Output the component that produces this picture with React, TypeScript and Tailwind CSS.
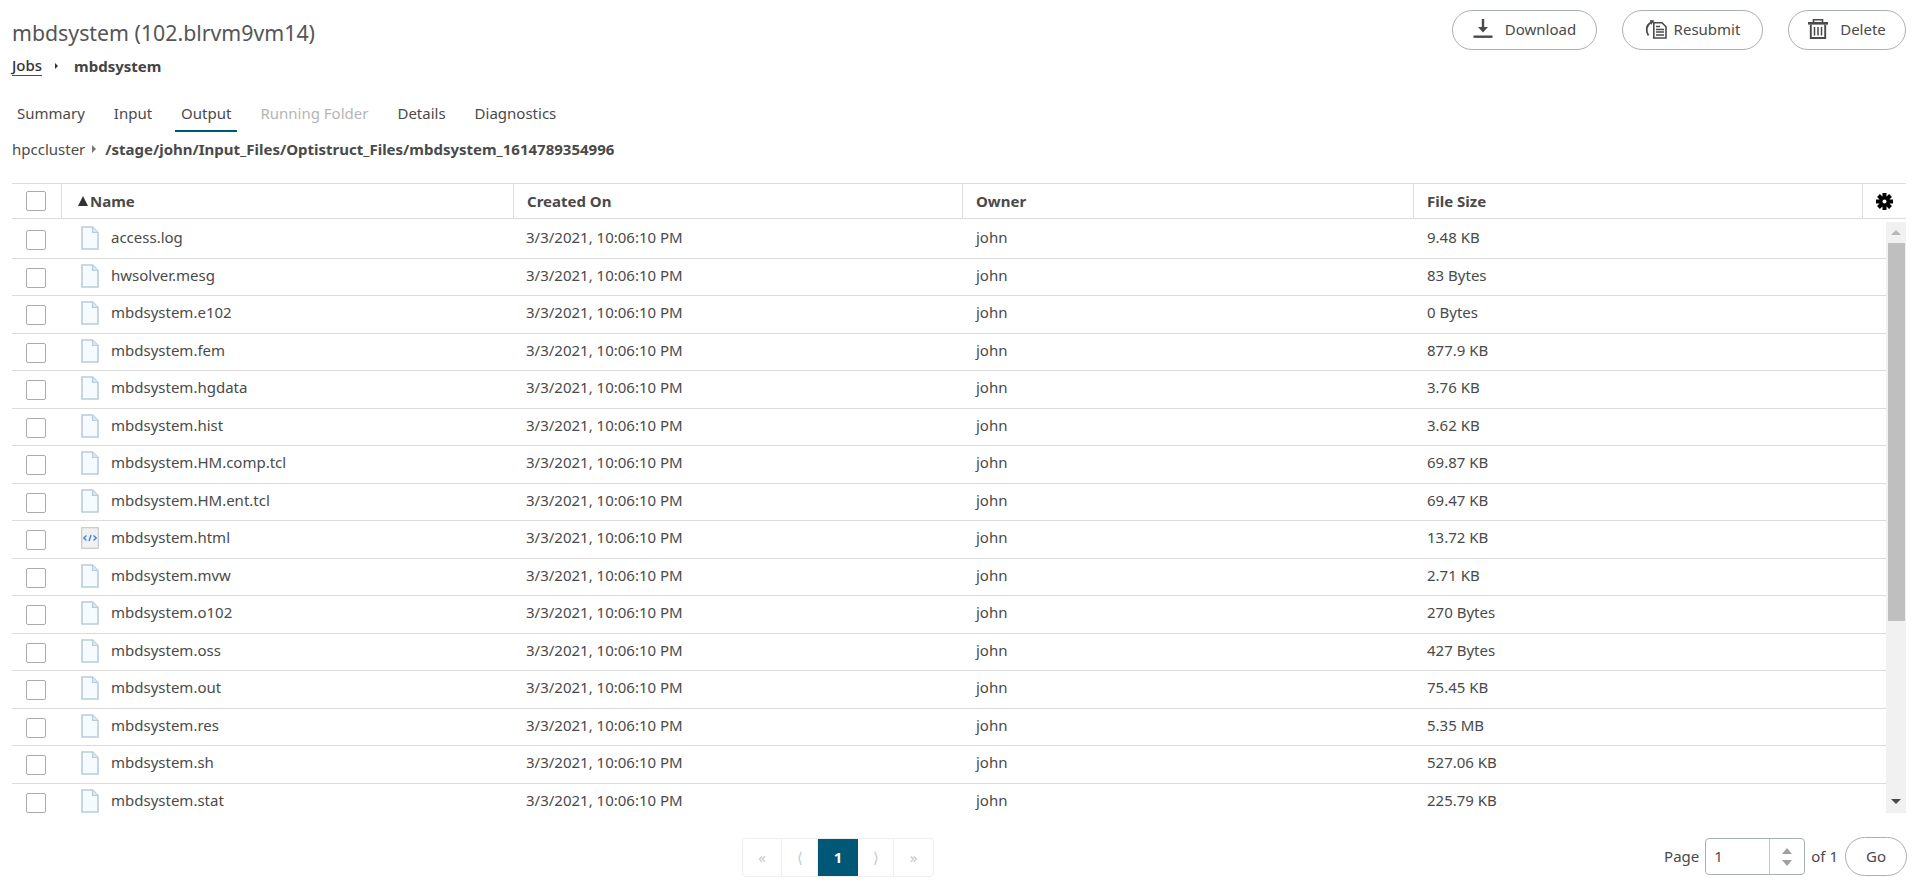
import React from "react";

const files = [
  ["access.log", "9.48 KB"],
  ["hwsolver.mesg", "83 Bytes"],
  ["mbdsystem.e102", "0 Bytes"],
  ["mbdsystem.fem", "877.9 KB"],
  ["mbdsystem.hgdata", "3.76 KB"],
  ["mbdsystem.hist", "3.62 KB"],
  ["mbdsystem.HM.comp.tcl", "69.87 KB"],
  ["mbdsystem.HM.ent.tcl", "69.47 KB"],
  ["mbdsystem.html", "13.72 KB"],
  ["mbdsystem.mvw", "2.71 KB"],
  ["mbdsystem.o102", "270 Bytes"],
  ["mbdsystem.oss", "427 Bytes"],
  ["mbdsystem.out", "75.45 KB"],
  ["mbdsystem.res", "5.35 MB"],
  ["mbdsystem.sh", "527.06 KB"],
  ["mbdsystem.stat", "225.79 KB"],
];

const tabs = ["Summary", "Input", "Output", "Running Folder", "Details", "Diagnostics"];

function FileIcon() {
  return (
    <svg width="18" height="24" viewBox="0 0 18 24" className="shrink-0">
      <path d="M1 1H11.5L17 6.5V23H1Z" fill="#f6fbff" stroke="#b9ccdd" strokeWidth="1.6" />
      <path d="M11.5 1V6.5H17" fill="#dbe6ef" stroke="#b9ccdd" strokeWidth="1.2" />
    </svg>
  );
}

function HtmlIcon() {
  return (
    <svg width="18" height="22" viewBox="0 0 18 22" className="shrink-0">
      <rect x="0.7" y="0.7" width="16.6" height="20.6" fill="#f1f1f1" stroke="#c8c8c8" strokeWidth="1.2" />
      <path d="M5.5 8.5L2.8 11L5.5 13.5M12.5 8.5L15.2 11L12.5 13.5M10 8L8 14" fill="none" stroke="#3b87e0" strokeWidth="1.4" />
    </svg>
  );
}

function Checkbox() {
  return <div className="w-5 h-5 border border-[#ababab] rounded-[2px] bg-white shrink-0" />;
}

function DownloadIcon() {
  return (
    <svg width="20" height="20" viewBox="0 0 20 20">
      <path d="M10 0V12" stroke="#4a4a4a" strokeWidth="2.4" />
      <path d="M5 8H15L10 13.5Z" fill="#4a4a4a" />
      <rect x="0.5" y="16.5" width="19" height="2.4" fill="#4a4a4a" />
    </svg>
  );
}

function ResubmitIcon() {
  return (
    <svg width="22" height="19" viewBox="0 0 22 19">
      <path d="M6 2.5C1 5 0.5 11 3.5 15.5" fill="none" stroke="#4a4a4a" strokeWidth="1.8" />
      <path d="M5 0L9.5 0.5L6 5Z" fill="#4a4a4a" />
      <path d="M8.8 2.8H17L21 6.8V18H8.8Z" fill="none" stroke="#4a4a4a" strokeWidth="1.6" />
      <path d="M11 9.5H19M11 12H19M11 15H19M11 6.5H15" stroke="#4a4a4a" strokeWidth="1.3" />
    </svg>
  );
}

function TrashIcon() {
  return (
    <svg width="20" height="20" viewBox="0 0 20 20">
      <path d="M5.5 3V0.8H14.5V3" fill="none" stroke="#4a4a4a" strokeWidth="1.6" />
      <rect x="0" y="3" width="20" height="2.6" fill="#4a4a4a" />
      <path d="M2.8 5.5V19H17.2V5.5" fill="none" stroke="#4a4a4a" strokeWidth="1.9" />
      <path d="M6.5 8V16.5M10 8V16.5M13.5 8V16.5" stroke="#4a4a4a" strokeWidth="1.5" />
    </svg>
  );
}

function GearIcon() {
  const teeth = [0, 45, 90, 135];
  return (
    <svg width="17" height="17" viewBox="0 0 17 17">
      {teeth.map((a) => (
        <rect key={a} x="6.5" y="0" width="4" height="17" fill="#000" transform={`rotate(${a} 8.5 8.5)`} />
      ))}
      <circle cx="8.5" cy="8.5" r="5.4" fill="#000" />
      <circle cx="8.5" cy="8.5" r="2" fill="#fff" />
    </svg>
  );
}

function ActionButton({ icon, label, width, gap }: { icon: React.ReactNode; label: string; width: string; gap: string }) {
  return (
    <button className={`${width} ${gap} h-10 pb-[2px] flex items-center justify-center rounded-full border border-[#a9b0b3] bg-white text-[#4a4a4a]`}>
      {icon}
      {label}
    </button>
  );
}

export default function App() {
  return (
    <div
      className="w-[1914px] h-[894px] bg-white text-[#4a4a4a] text-[15px] overflow-hidden"
      style={{ fontFamily: '"Noto Sans", sans-serif' }}
    >
      <div className="flex justify-between pl-3 pr-2 pt-2.5 h-[102px]">
        <div>
          <div className="text-[21.3px] leading-[28px] mt-[9px] text-[#555]">mbdsystem (102.blrvm9vm14)</div>
          <div className="flex items-center mt-[8px] leading-[20px]">
            <span className="border-b border-[#4a4a4a] leading-[20px] text-[#333] font-medium">Jobs</span>
            <span className="ml-[13px] mr-[16px] w-0 h-0 border-y-[3px] border-y-transparent border-l-[3px] border-l-[#333]" />
            <span className="font-bold text-[#444]">mbdsystem</span>
          </div>
        </div>
        <div className="flex gap-[25px] h-10">
          <ActionButton icon={<DownloadIcon />} label="Download" width="w-[145px]" gap="gap-[12px]" />
          <ActionButton icon={<ResubmitIcon />} label="Resubmit" width="w-[141px]" gap="gap-[7px]" />
          <ActionButton icon={<TrashIcon />} label="Delete" width="w-[118px]" gap="gap-[12px]" />
        </div>
      </div>

      <div className="flex gap-[17px] pl-[11px] h-[32px] -mt-[2px]">
        {tabs.map((t) => (
          <div
            key={t}
            className={`px-1.5 h-[32px] leading-[27px] ${
              t === "Output"
                ? "border-b-2 border-[#005776]"
                : t === "Running Folder"
                  ? "text-[#b5b5b5]"
                  : ""
            }`}
          >
            {t}
          </div>
        ))}
      </div>

      <div className="flex items-center pl-3 h-[20px] mt-[7px]">
        <span>hpccluster</span>
        <span className="ml-[7px] mr-[9px] w-0 h-0 border-y-[4px] border-y-transparent border-l-[4px] border-l-[#777]" />
        <span className="font-bold">/stage/john/Input_Files/Optistruct_Files/mbdsystem_1614789354996</span>
      </div>

      <div className="ml-3 mr-2 mt-6">
        <div className="flex h-[36px] border-y border-[#dcdcdc] font-bold items-center">
          <div className="w-[50px] h-full flex items-center pl-[14px] border-r border-[#dcdcdc]">
            <Checkbox />
          </div>
          <div className="w-[452px] h-full flex items-center gap-[2px] pl-[16px] border-r border-[#dcdcdc]">
            <span className="w-0 h-0 border-x-[5.5px] border-x-transparent border-b-[10px] border-b-[#333]" />
            Name
          </div>
          <div className="w-[449px] h-full flex items-center pl-[13px] border-r border-[#dcdcdc]">Created On</div>
          <div className="w-[451px] h-full flex items-center pl-[13px] border-r border-[#dcdcdc]">Owner</div>
          <div className="w-[449px] h-full flex items-center pl-[13px] border-r border-[#dcdcdc]">File Size</div>
          <div className="flex-1 flex justify-center">
            <GearIcon />
          </div>
        </div>

        <div className="flex h-[594px]">
          <div className="flex-1 overflow-hidden pt-[2px]">
            {files.map(([name, size]) => (
              <div key={name} className="flex items-center h-[37.5px] border-b border-[#dcdcdc]">
                <div className="w-[50px] pl-[14px] pt-[2px]">
                  <Checkbox />
                </div>
                <div className="w-[452px] flex items-center gap-[12px] pl-[19px] pb-[2px]">
                  {name === "mbdsystem.html" ? <HtmlIcon /> : <FileIcon />}
                  <span className="pb-[2px]">{name}</span>
                </div>
                <div className="w-[449px] pl-[12px] pb-[4px]">3/3/2021, 10:06:10 PM</div>
                <div className="w-[451px] pl-[13px] pb-[4px]">john</div>
                <div className="w-[449px] pl-[13px] pb-[4px]">{size}</div>
              </div>
            ))}
          </div>
          <div className="w-5 bg-[#f1f1f1] mt-[3px] flex flex-col items-center">
            <div className="h-[21px] flex items-center justify-center">
              <div className="w-0 h-0 border-x-[5px] border-x-transparent border-b-[5px] border-b-[#b5b5b5]" />
            </div>
            <div className="w-[17px] h-[378px] bg-[#bfbfbf]" />
            <div className="flex-1 flex items-end pb-[9px]">
              <div className="w-0 h-0 border-x-[5px] border-x-transparent border-t-[5px] border-t-[#4a4a4a]" />
            </div>
          </div>
        </div>
      </div>

      <div className="relative flex items-center justify-center h-10 mt-[24px] pr-[238px]">
        <div className="flex h-[39px] border border-[#eeeeee] rounded-[4px] text-[#c8c8c8] overflow-hidden">
          <div className="w-[39px] flex items-center justify-center border-r border-[#eeeeee]">«</div>
          <div className="w-[36px] flex items-center justify-center border-r border-[#eeeeee]">⟨</div>
          <div className="w-[40px] flex items-center justify-center bg-[#005776] text-white font-bold">1</div>
          <div className="w-[36px] flex items-center justify-center border-r border-[#eeeeee]">⟩</div>
          <div className="w-[39px] flex items-center justify-center">»</div>
        </div>
        <div className="absolute right-[7px] top-0 flex items-center">
          <span className="mr-[6px]">Page</span>
          <div className="flex w-[100px] h-[37px] border border-[#a9b0b3] rounded-[4px]">
            <div className="flex-1 pl-2 leading-[35px]">1</div>
            <div className="w-[35px] border-l border-[#c4c8ca] flex flex-col items-center justify-center gap-[6px]">
              <div className="w-0 h-0 border-x-[5px] border-x-transparent border-b-[6px] border-b-[#a0a0a0]" />
              <div className="w-0 h-0 border-x-[5px] border-x-transparent border-t-[6px] border-t-[#a0a0a0]" />
            </div>
          </div>
          <span className="ml-[6px] mr-[7px]">of 1</span>
          <button className="w-[62px] h-[39px] rounded-full border border-[#a9b0b3] bg-white">Go</button>
        </div>
      </div>
    </div>
  );
}
